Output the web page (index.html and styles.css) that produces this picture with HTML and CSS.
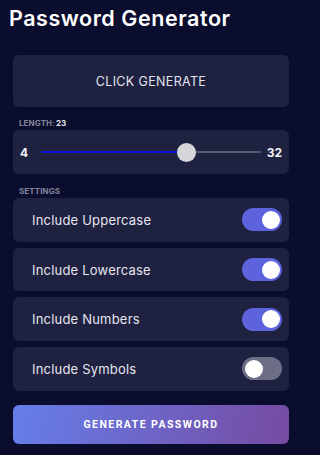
FILE: index.html
```html
<!DOCTYPE html>
<html lang="en">
<head>
<meta charset="utf-8">
<title>Password Generator</title>
<link rel="stylesheet" href="styles.css">
</head>
<body>
<h1 class="title">Password Generator</h1>
<main class="panel">
  <div class="output">CLICK GENERATE</div>
  <div class="label">LENGTH:<span class="label-value">23</span></div>
  <div class="slider-card">
    <span class="slider-num">4</span>
    <div class="track">
      <div class="track-fill" style="width: 66%"></div>
      <div class="thumb" style="left: 66%"></div>
    </div>
    <span class="slider-num">32</span>
  </div>
  <div class="label settings-label">SETTINGS</div>
  <div class="settings">
    <div class="row"><span class="row-text">Include Uppercase</span><span class="toggle on"><span class="knob"></span></span></div>
    <div class="row"><span class="row-text">Include Lowercase</span><span class="toggle on"><span class="knob"></span></span></div>
    <div class="row"><span class="row-text">Include Numbers</span><span class="toggle on"><span class="knob"></span></span></div>
    <div class="row"><span class="row-text">Include Symbols</span><span class="toggle"><span class="knob"></span></span></div>
  </div>
  <button class="generate">GENERATE PASSWORD</button>
</main>
</body>
</html>
```
FILE: styles.css
```css
html, body {
  margin: 0;
  padding: 0;
  background: #0b0d2e;
}
body {
  width: 302px;
  height: 455px;
  overflow: hidden;
  font-family: Inter, "Noto Sans", sans-serif;
  color: #ffffff;
}
.title {
  margin: 0;
  padding: 5px 9px 0;
  font-size: 21.5px;
  line-height: 27px;
  font-weight: 600;
  letter-spacing: 0.55px;
  color: #ffffff;
}
.panel {
  padding: 23px 13px 0;
  display: flex;
  flex-direction: column;
}
.output {
  height: 52px;
  background: #1f2141;
  border-radius: 6px;
  display: flex;
  align-items: center;
  justify-content: center;
  font-size: 12.5px;
  color: #e4e4ee;
  letter-spacing: 0.35px;
}
.label {
  margin: 10px 0 1px 6px;
  font-size: 8px;
  line-height: 12px;
  font-weight: 700;
  color: #838599;
  letter-spacing: 0.1px;
}
.label-value {
  color: #e8e8f0;
  margin-left: 1px;
}
.slider-card {
  height: 44px;
  background: #1f2141;
  border-radius: 6px;
  display: flex;
  align-items: center;
  padding: 0 7px;
}
.slider-num {
  font-size: 12px;
  font-weight: 700;
  color: #f0f0f6;
}
.track {
  position: relative;
  flex: 1;
  height: 2px;
  background: #585a70;
  margin: 0 6px 0 13px;
  border-radius: 1px;
}
.track-fill {
  position: absolute;
  left: 0;
  top: 0;
  height: 2px;
  background: #1414d6;
}
.thumb {
  position: absolute;
  top: -8.5px;
  width: 19px;
  height: 19px;
  margin-left: -9.5px;
  border-radius: 50%;
  background: #d6d6da;
}
.settings-label {
  margin-top: 11px;
}
.settings {
  display: flex;
  flex-direction: column;
  gap: 6px;
}
.row {
  height: 43.7px;
  background: #1f2141;
  border-radius: 6px;
  display: flex;
  align-items: center;
  justify-content: space-between;
  padding: 0 7px 0 19px;
}
.row-text {
  font-size: 13px;
  color: #e6e6ee;
  letter-spacing: 0.2px;
}
.toggle {
  width: 40px;
  height: 23px;
  border-radius: 12px;
  background: #6b6e86;
  display: flex;
  align-items: center;
  padding: 0 2.5px;
  box-sizing: border-box;
}
.toggle.on {
  background: #5d63dc;
  justify-content: flex-end;
}
.knob {
  width: 18px;
  height: 18px;
  border-radius: 50%;
  background: #ffffff;
}
.generate {
  margin-top: 14px;
  height: 39px;
  border: none;
  border-radius: 6px;
  background: linear-gradient(100deg, #667eea 0%, #764ba2 100%);
  color: #ffffff;
  font-family: Roboto, "Liberation Sans", sans-serif;
  font-size: 10.5px;
  font-weight: 700;
  letter-spacing: 1.45px;
}
```
